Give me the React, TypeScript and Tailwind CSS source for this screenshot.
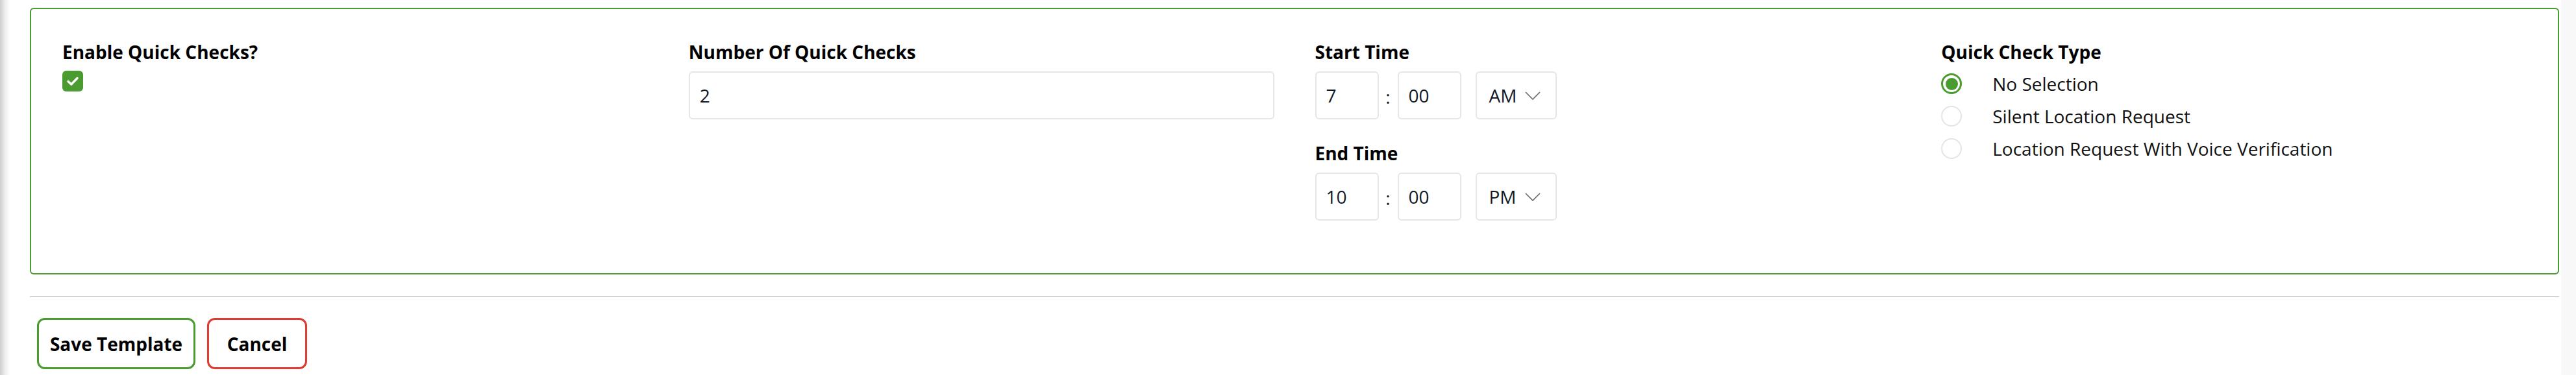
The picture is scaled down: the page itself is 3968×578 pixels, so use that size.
import React from 'react';

const green = 'border-[#4a9b30]';

function Label({ children }: { children: React.ReactNode }) {
  return <div className="text-[28px] font-bold leading-[42px] text-black">{children}</div>;
}

function Box({ value, width }: { value: string; width: string }) {
  return (
    <div
      className={`${width} flex h-[74px] items-center rounded-[6px] border-2 border-[#e6e6e6] bg-white pl-[15px] text-[28px] text-[#111827]`}
    >
      {value}
    </div>
  );
}

function TimeRow({ hour, minute, period }: { hour: string; minute: string; period: string }) {
  return (
    <div className="mt-[9px] flex items-center">
      <Box value={hour} width="w-[98px]" />
      <span className="w-[29px] pt-[4px] text-center text-[28px] text-[#111827]">:</span>
      <Box value={minute} width="w-[98px]" />
      <div className="ml-[22px] flex h-[74px] w-[125px] items-center rounded-[6px] border-2 border-[#e6e6e6] pl-[19px] text-[28px] text-[#111827]">
        <span>{period}</span>
        <svg width="24" height="13" viewBox="0 0 24 13" className="ml-[13px]">
          <polyline points="1,1 12,12 23,1" fill="none" stroke="#666" strokeWidth="1.6" />
        </svg>
      </div>
    </div>
  );
}

function Radio({ label, checked }: { label: string; checked?: boolean }) {
  return (
    <div className="flex h-[42px] items-center">
      <span
        className={`flex h-[32px] w-[32px] items-center justify-center rounded-full ${
          checked ? 'border-[3px] border-[#4a9b30]' : 'border-2 border-[#e4e4e4]'
        }`}
      >
        {checked && <span className="h-[19px] w-[19px] rounded-full bg-[#4a9b30]" />}
      </span>
      <span className="ml-[47px] text-[28px] leading-[42px] text-[#111]">{label}</span>
    </div>
  );
}

export default function App() {
  return (
    <div className="flex h-[578px] w-full bg-white font-['Open_Sans',sans-serif]">
      <div className="w-[15px] shrink-0 bg-gradient-to-r from-[#cfcfcf] via-[#ececec] to-white" />
      <div className="flex-1 pl-[31px] pr-[3px] pt-[12px]">
        <div className={`rounded-[6px] border-2 ${green} px-[48px] pb-[81px] pt-[45px]`}>
          <div className="grid grid-cols-4 gap-x-[63px]">
            <div>
              <Label>Enable Quick Checks?</Label>
              <div className="mt-[8px] flex h-[32px] w-[32px] items-center justify-center rounded-[6px] bg-[#4a9b30]">
                <svg width="18" height="14" viewBox="0 0 18 14">
                  <polyline
                    points="2,7.5 6.8,12 16,2.5"
                    fill="none"
                    stroke="white"
                    strokeWidth="3.4"
                    strokeLinecap="round"
                    strokeLinejoin="round"
                  />
                </svg>
              </div>
            </div>
            <div>
              <Label>Number Of Quick Checks</Label>
              <div className="mt-[9px]">
                <Box value="2" width="w-full" />
              </div>
            </div>
            <div>
              <Label>Start Time</Label>
              <TimeRow hour="7" minute="00" period="AM" />
              <div className="mt-[31px]">
                <Label>End Time</Label>
              </div>
              <TimeRow hour="10" minute="00" period="PM" />
            </div>
            <div>
              <Label>Quick Check Type</Label>
              <div className="mt-[7px] flex flex-col gap-[8px]">
                <Radio label="No Selection" checked />
                <Radio label="Silent Location Request" />
                <Radio label="Location Request With Voice Verification" />
              </div>
            </div>
          </div>
        </div>
        <div className="mt-[33px] h-[2px] bg-[#d1d1d6]" />
        <div className="ml-[11px] mt-[32px] flex gap-[18px]">
          <button
            className={`h-[79px] w-[244px] rounded-[12px] border-[3px] ${green} text-[28px] font-bold text-black`}
          >
            Save Template
          </button>
          <button className="h-[79px] w-[154px] rounded-[12px] border-[3px] border-[#e03b33] text-[28px] font-bold text-black">
            Cancel
          </button>
        </div>
      </div>
      <div className="w-[23px] shrink-0 bg-[#f8f8f8]" />
    </div>
  );
}
